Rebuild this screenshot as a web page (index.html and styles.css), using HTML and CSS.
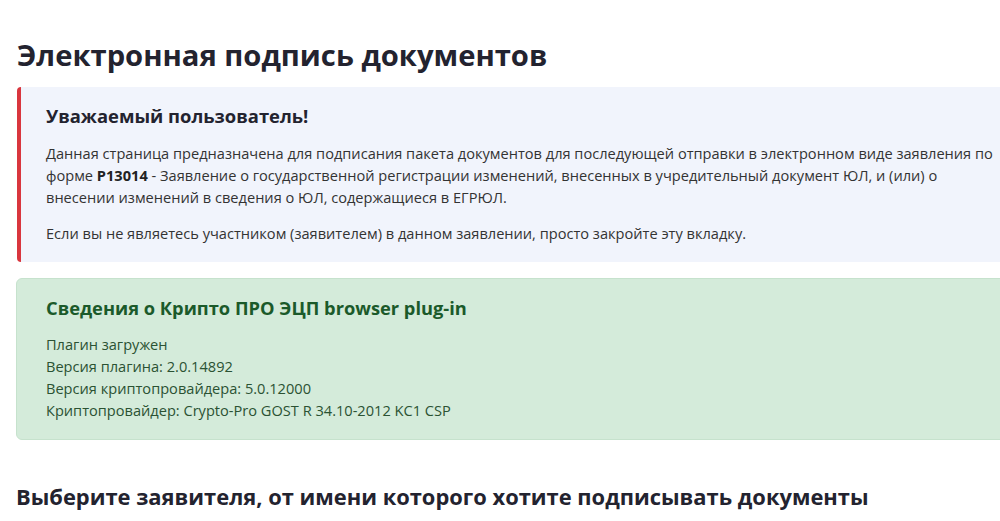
FILE: index.html
```html
<!DOCTYPE html>
<html lang="ru">
<head>
<meta charset="utf-8">
<title>Электронная подпись документов</title>
<link rel="stylesheet" href="styles.css">
</head>
<body>
<main class="page">
  <h1 class="title">Электронная подпись документов</h1>
  <section class="notice">
    <h2 class="notice-title">Уважаемый пользователь!</h2>
    <p class="text">Данная страница предназначена для подписания пакета документов для последующей отправки в электронном виде заявления по форме <b>Р13014</b> - Заявление о государственной регистрации изменений, внесенных в учредительный документ ЮЛ, и (или) о внесении изменений в сведения о ЮЛ, содержащиеся в ЕГРЮЛ.</p>
    <p class="text">Если вы не являетесь участником (заявителем) в данном заявлении, просто закройте эту вкладку.</p>
  </section>
  <section class="plugin">
    <h2 class="plugin-title">Сведения о Крипто ПРО ЭЦП browser plug-in</h2>
    <div class="plugin-info">
      <div>Плагин загружен</div>
      <div>Версия плагина: 2.0.14892</div>
      <div>Версия криптопровайдера: 5.0.12000</div>
      <div>Криптопровайдер: Crypto-Pro GOST R 34.10-2012 KC1 CSP</div>
    </div>
  </section>
  <h2 class="section-title">Выберите заявителя, от имени которого хотите подписывать документы</h2>
</main>
</body>
</html>
```
FILE: styles.css
```css
html, body {
  margin: 0;
  padding: 0;
  background: #ffffff;
  overflow: hidden;
}
body {
  font-family: "Open Sans", "Noto Sans", sans-serif;
  color: #333333;
}
.page {
  width: 1012px;
  padding: 38px 0 0 16px;
}
.title {
  margin: 0 0 15px 1px;
  font-size: 29.2px;
  line-height: 34px;
  font-weight: 700;
  color: #23232f;
}
.notice {
  background: #f1f4fc;
  border-left: 4px solid #d9363e;
  border-radius: 4px 0 0 4px;
  padding: 16px 30px 18px 25px;
  margin-left: 1px;
}
.notice-title {
  margin: 0 0 13px;
  font-size: 18.4px;
  line-height: 26px;
  font-weight: 700;
  color: #23232f;
}
.text {
  margin: 0 0 14px;
  font-size: 14.6px;
  line-height: 22px;
  color: #333333;
}
.text:last-child {
  margin-bottom: 0;
}
.text b {
  font-weight: 700;
  color: #222222;
}
.plugin {
  margin-top: 16px;
  background: #d4ebda;
  border: 1px solid #c6e2cd;
  border-radius: 6px 0 0 6px;
  padding: 16px 30px 18px 29px;
}
.plugin-title {
  margin: 0 0 12px;
  font-size: 18.3px;
  line-height: 26px;
  font-weight: 700;
  color: #1b5a2a;
}
.plugin-info {
  font-size: 14.6px;
  line-height: 22px;
  color: #2b5233;
}
.section-title {
  margin: 43px 0 0 0;
  font-size: 21.9px;
  line-height: 28px;
  font-weight: 700;
  color: #23232f;
}
```
